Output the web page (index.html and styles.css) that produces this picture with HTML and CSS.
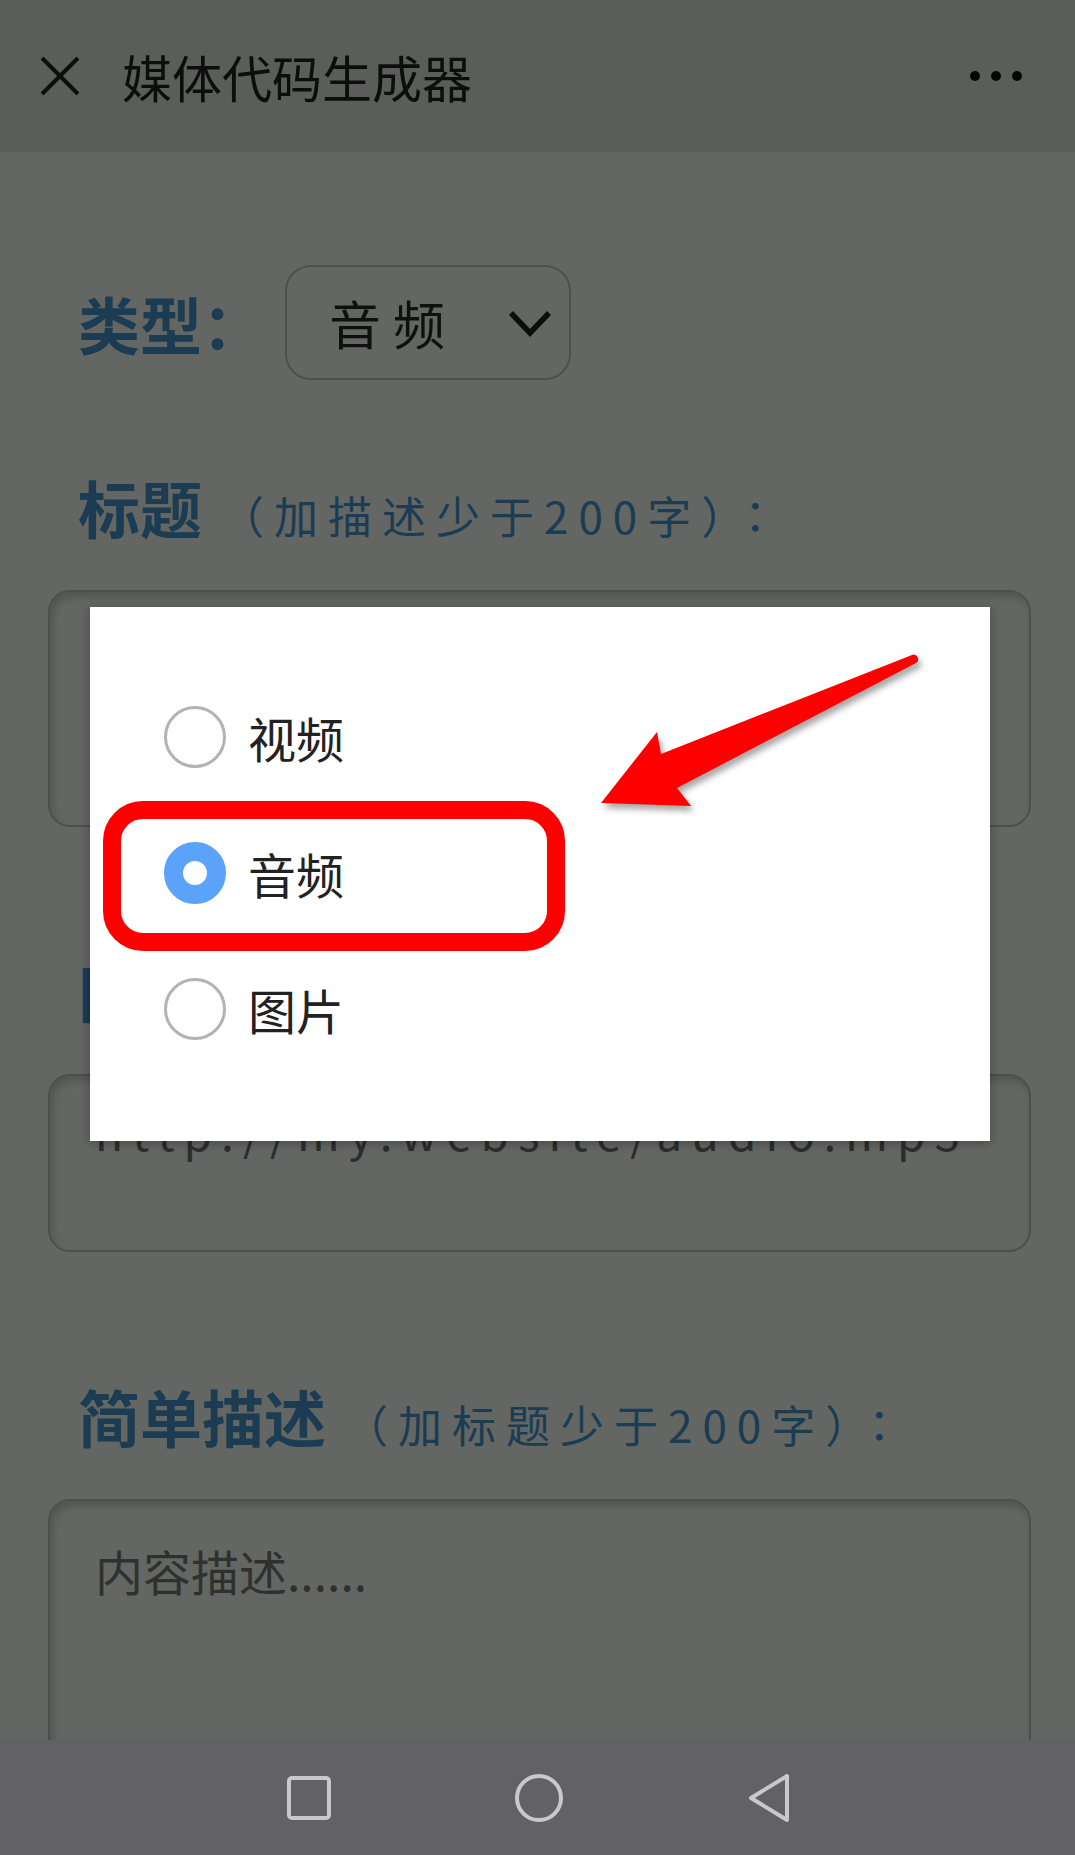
FILE: index.html
```
<!DOCTYPE html>
<html>
    <head>
        <meta charset="utf-8">
        <title>媒体代码生成器</title>

        <link rel="stylesheet" href="styles.css">
    </head>
    <body>
        <div class="screen">
            <div class="page">
                <div class="top-bar">
                    <svg class="close-icon" viewBox="0 0 40 40">
                        <path d="M2 2 L38 38 M38 2 L2 38" stroke="#222" stroke-width="4" fill="none"/>
                    </svg>
                    <p class="top-title">媒体代码生成器</p>
                    <svg class="more-icon" viewBox="0 0 52 12">
                        <circle cx="5" cy="6" r="5" fill="#111"/>
                        <circle cx="26" cy="6" r="5" fill="#111"/>
                        <circle cx="47" cy="6" r="5" fill="#111"/>
                    </svg>
                </div>

                <div class="form">
                    <div class="type-row">
                        <span class="label">类型：</span>
                        <div class="select">
                            <span class="select-text">音频</span>
                            <svg class="chevron" viewBox="0 0 46 30">
                                <polyline points="4,5 23,25 42,5" stroke="#222" stroke-width="5.5" fill="none"/>
                            </svg>
                        </div>
                    </div>

                    <div class="field first">
                        <p class="label">标题<span class="hint">（加描述少于200字）<span class="colon">：</span></span></p>
                        <textarea class="box title-box"></textarea>
                    </div>

                    <div class="field">
                        <p class="label">网址<span class="hint">（音频文件地址）<span class="colon">：</span></span></p>
                        <textarea class="box url-box">http://my.website/audio.mp3</textarea>
                    </div>

                    <div class="field">
                        <p class="label">简单描述<span class="hint">（加标题少于200字）<span class="colon">：</span></span></p>
                        <textarea class="box desc-box" placeholder="内容描述......"></textarea>
                    </div>
                </div>

                <div class="mask">
                    <div class="dialog">
                        <div class="option"><span class="radio"></span>视频</div>
                        <div class="option"><span class="radio checked"></span>音频</div>
                        <div class="option"><span class="radio"></span>图片</div>

                        <div class="mark-box"></div>
                        <svg class="mark-arrow" viewBox="0 0 340 180">
                            <path d="M11 156 L67 85 L71 107 L322 8 A4.5 4.5 0 0 1 326 16 L87 141 L101 159 Z" fill="#ff0000"/>
                        </svg>
                    </div>
                </div>
            </div>

            <div class="nav-bar">
                <svg class="nav-icon" width="44" height="44" viewBox="0 0 44 44">
                    <rect x="2" y="2" width="40" height="40" rx="3" stroke="#c9c9cb" stroke-width="4" fill="none"/>
                </svg>
                <svg class="nav-icon" width="48" height="48" viewBox="0 0 48 48">
                    <circle cx="24" cy="24" r="22" stroke="#c9c9cb" stroke-width="4" fill="none"/>
                </svg>
                <svg class="nav-icon" width="44" height="50" viewBox="0 0 44 50">
                    <path d="M4 25 L40 3 L40 47 Z" stroke="#c9c9cb" stroke-width="4" stroke-linejoin="round" fill="none"/>
                </svg>
            </div>
        </div>
    </body>
</html>
```

FILE: styles.css
```
body{
    margin:0;
    font-family:"Noto Sans CJK SC", "Noto Sans", sans-serif;
}

.screen{
    height:100vh;
    display:flex;
    flex-direction:column;
    overflow:hidden;
}

.page{
    flex:1;
    position:relative;
    overflow:hidden;
    background-color:#fafffa;
}

.top-bar{
    height:152px;
    box-sizing:border-box;
    padding:0 53px 0 40px;
    display:flex;
    align-items:center;
    background-color:#e4e8e4;
}

.close-icon{
    width:40px;
    height:40px;
}

.top-title{
    flex:1;
    margin:0 0 0 42px;
    font-size:50px;
    line-height:1;
    color:#222;
}

.more-icon{
    width:52px;
    height:12px;
}

.form{
    padding:113px 44px 0 48px;
}

.type-row{
    display:flex;
    align-items:center;
    padding-left:30px;
}

.label{
    margin:0;
    font-size:62px;
    font-weight:bold;
    line-height:80px;
    color:#4496cd;
}

.type-row .label{
    margin-right:21px;
}

.select{
    width:286px;
    height:115px;
    box-sizing:border-box;
    padding:0 16px 0 42px;
    border:2px solid #c0c5c0;
    border-radius:26px;
    display:flex;
    align-items:center;
    justify-content:space-between;
}

.select-text{
    font-size:52px;
    letter-spacing:12px;
    color:#2a2a2a;
}

.chevron{
    width:46px;
    height:30px;
}

.field{
    margin-top:124px;
}

.field.first{
    margin-top:87px;
}

.field .label{
    padding-left:30px;
}

.hint{
    margin-left:18px;
    font-size:44px;
    font-weight:normal;
    letter-spacing:10px;
}

.colon{
    font-family:"Noto Sans CJK JP", sans-serif;
}

.box{
    display:block;
    width:100%;
    box-sizing:border-box;
    margin-top:35px;
    padding:31px 45px;
    border:2px solid #c0c5c0;
    border-radius:22px;
    background-color:transparent;
    box-shadow:inset 3px 5px 8px rgba(0,0,0,0.18);
    font-family:"Noto Sans CJK SC", "Noto Sans", sans-serif;
    font-size:48px;
    line-height:64px;
    color:#757a75;
    resize:none;
    outline:none;
    overflow:hidden;
}

.box::placeholder{
    color:#757a75;
    opacity:1;
}

.title-box{
    height:237px;
}

.url-box{
    height:178px;
    padding-top:23px;
    font-size:46px;
    letter-spacing:9px;
    white-space:nowrap;
    color:#6f736f;
}

.desc-box{
    height:320px;
    padding-top:37px;
}

.mask{
    position:absolute;
    top:0;
    left:0;
    right:0;
    bottom:0;
    background-color:rgba(0,0,0,0.6);
    display:flex;
    align-items:center;
    justify-content:center;
}

.dialog{
    position:relative;
    width:900px;
    height:534px;
    box-sizing:border-box;
    margin:8px 0 0 5px;
    padding:62px 0 0 74px;
    background-color:white;
    box-shadow:0 2px 10px rgba(0,0,0,0.3);
}

.option{
    height:136px;
    display:flex;
    align-items:center;
    font-size:48px;
    color:#222;
}

.radio{
    width:62px;
    height:62px;
    box-sizing:border-box;
    margin-right:22px;
    border:3px solid #b3b3b3;
    border-radius:50%;
}

.radio.checked{
    border:19px solid #5aa2fa;
}

.mark-box{
    position:absolute;
    left:13px;
    top:194px;
    width:462px;
    height:150px;
    box-sizing:border-box;
    border:18px solid #ff0000;
    border-radius:40px;
}

.mark-arrow{
    position:absolute;
    left:500px;
    top:40px;
    width:340px;
    height:180px;
    filter:drop-shadow(3px 5px 3px rgba(0,0,0,0.35));
}

.nav-bar{
    height:115px;
    flex-shrink:0;
    box-sizing:border-box;
    padding-left:287px;
    display:flex;
    align-items:center;
    gap:184px;
    background-color:#626164;
}
```
